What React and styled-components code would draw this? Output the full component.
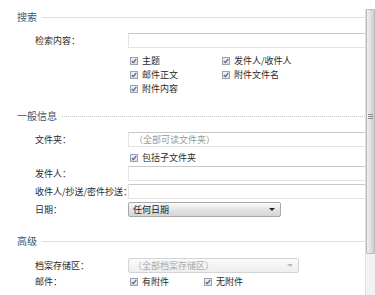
import React from 'react';
import styled, { createGlobalStyle } from 'styled-components';

const GlobalStyle = createGlobalStyle`
  html, body {
    margin: 0;
    padding: 0;
    background: #fff;
    overflow: hidden;
  }
  body {
    font-family: "Noto Sans CJK SC", "Noto Sans", sans-serif;
    font-size: 9px;
    color: #333;
  }
`;

const Page = styled.div`
  display: flex;
  width: 375px;
  height: 295px;
  overflow: hidden;
`;

const Main = styled.div`
  flex: 1;
  display: flex;
  flex-direction: column;
  padding-top: 11px;
`;

const SectionHead = styled.div`
  display: flex;
  align-items: center;
  height: 12px;
  margin-top: ${(p) => p.$top || 0}px;
  padding-left: 17px;
  font-size: 10px;
  color: #3d5573;
  line-height: 12px;
`;

const HeadLine = styled.div`
  flex: 1;
  margin-left: 5px;
  border-top: 1px ${(p) => (p.$dotted ? 'dotted #c8c8c8' : 'solid #e0e0e0')};
`;

const Row = styled.div`
  display: grid;
  grid-template-columns: 93px 1fr;
  align-items: center;
  height: ${(p) => p.$h || 15}px;
  margin-top: ${(p) => p.$top || 0}px;
  padding-left: 35px;
`;

const Label = styled.div`
  white-space: nowrap;
  line-height: 12px;
  color: #2a2a2a;
`;

const TextBox = styled.div`
  height: 15px;
  box-sizing: border-box;
  border: 1px solid #e4e4e4;
  border-top-color: #c8c8c8;
  border-right: none;
  background: #fff;
  display: flex;
  align-items: center;
  padding-left: 5px;
  color: #999;
  white-space: nowrap;
`;

const Select = styled.div`
  width: ${(p) => p.$w}px;
  height: 15px;
  box-sizing: border-box;
  border: 1px solid ${(p) => (p.$disabled ? '#d4d4d4' : '#a8a8a8')};
  border-radius: 2px;
  background: ${(p) =>
    p.$disabled
      ? 'linear-gradient(#fafafa, #eeeeee)'
      : 'linear-gradient(#fbfbfb, #e2e2e2 55%, #d6d6d6)'};
  display: flex;
  align-items: center;
  justify-content: space-between;
  padding: 0 5px 0 4px;
  color: ${(p) => (p.$disabled ? '#aaa' : '#222')};
  white-space: nowrap;
`;

const Arrow = styled.span`
  width: 0;
  height: 0;
  border-left: 3px solid transparent;
  border-right: 3px solid transparent;
  border-top: 3px solid ${(p) => (p.$disabled ? '#bbb' : '#222')};
`;

const CheckGrid = styled.div`
  display: grid;
  grid-template-columns: ${(p) => p.$cols};
  grid-auto-rows: 14px;
  align-items: center;
  margin-top: ${(p) => p.$top ?? 0}px;
  padding-left: ${(p) => p.$left ?? 130}px;
`;

const CheckItem = styled.div`
  display: flex;
  align-items: center;
  gap: 4px;
  white-space: nowrap;
  line-height: 12px;
  color: #2a2a2a;
`;

const Box = styled.span`
  width: 8px;
  height: 8px;
  box-sizing: border-box;
  border: 1px solid #9aa3ad;
  background: linear-gradient(#eef1f4, #d9dee4);
  display: flex;
  align-items: center;
  justify-content: center;
`;

const ScrollTrack = styled.div`
  width: 10px;
  margin-top: 9px;
  display: flex;
  flex-direction: column;
  background: #f2f2f2;
  border-left: 1px solid #e0e0e0;
  box-sizing: border-box;
`;

const Thumb = styled.div`
  height: 245px;
  box-sizing: border-box;
  border: 1px solid #b9b9b9;
  border-radius: 1px;
  background: linear-gradient(90deg, #f0f0f0, #dcdcdc 60%, #cfcfcf);
  display: flex;
  flex-direction: column;
  align-items: center;
  justify-content: center;
  gap: 1px;
  padding-bottom: 30px;
`;

const Grip = styled.span`
  width: 5px;
  height: 1px;
  background: #8c8c8c;
`;

const Check = ({ children }) => (
  <CheckItem>
    <Box>
      <svg width="6" height="6" viewBox="0 0 6 6">
        <path d="M0.8 3.2 L2.3 4.7 L5.3 0.9" fill="none" stroke="#4a5f7a" strokeWidth="1.1" />
      </svg>
    </Box>
    {children}
  </CheckItem>
);

const App = () => (
  <Page>
    <GlobalStyle />
    <Main>
      <SectionHead>
        搜索
        <HeadLine />
      </SectionHead>
      <Row $top={10}>
        <Label>检索内容：</Label>
        <TextBox />
      </Row>
      <CheckGrid $cols="92px 1fr" $top={6}>
        <Check>主题</Check>
        <Check>发件人/收件人</Check>
        <Check>邮件正文</Check>
        <Check>附件文件名</Check>
        <Check>附件内容</Check>
      </CheckGrid>

      <SectionHead $top={14}>
        一般信息
        <HeadLine $dotted />
      </SectionHead>
      <Row $top={10}>
        <Label>文件夹：</Label>
        <TextBox>（全部可读文件夹）</TextBox>
      </Row>
      <CheckGrid $cols="1fr" $top={4}>
        <Check>包括子文件夹</Check>
      </CheckGrid>
      <Row $top={1}>
        <Label>发件人：</Label>
        <TextBox />
      </Row>
      <Row $top={3}>
        <Label>收件人/抄送/密件抄送：</Label>
        <TextBox />
      </Row>
      <Row $top={3}>
        <Label>日期：</Label>
        <Select $w={153}>
          任何日期
          <Arrow />
        </Select>
      </Row>

      <SectionHead $top={18}>
        高级
        <HeadLine />
      </SectionHead>
      <Row $top={11}>
        <Label>档案存储区：</Label>
        <Select $w={171} $disabled>
          （全部档案存储区）
          <Arrow $disabled />
        </Select>
      </Row>
      <Row $h={14} $top={2}>
        <Label>邮件：</Label>
        <CheckGrid $cols="74px 1fr" $left={2}>
          <Check>有附件</Check>
          <Check>无附件</Check>
        </CheckGrid>
      </Row>
    </Main>
    <ScrollTrack>
      <Thumb>
        <Grip />
        <Grip />
        <Grip />
      </Thumb>
    </ScrollTrack>
  </Page>
);

export default App;
